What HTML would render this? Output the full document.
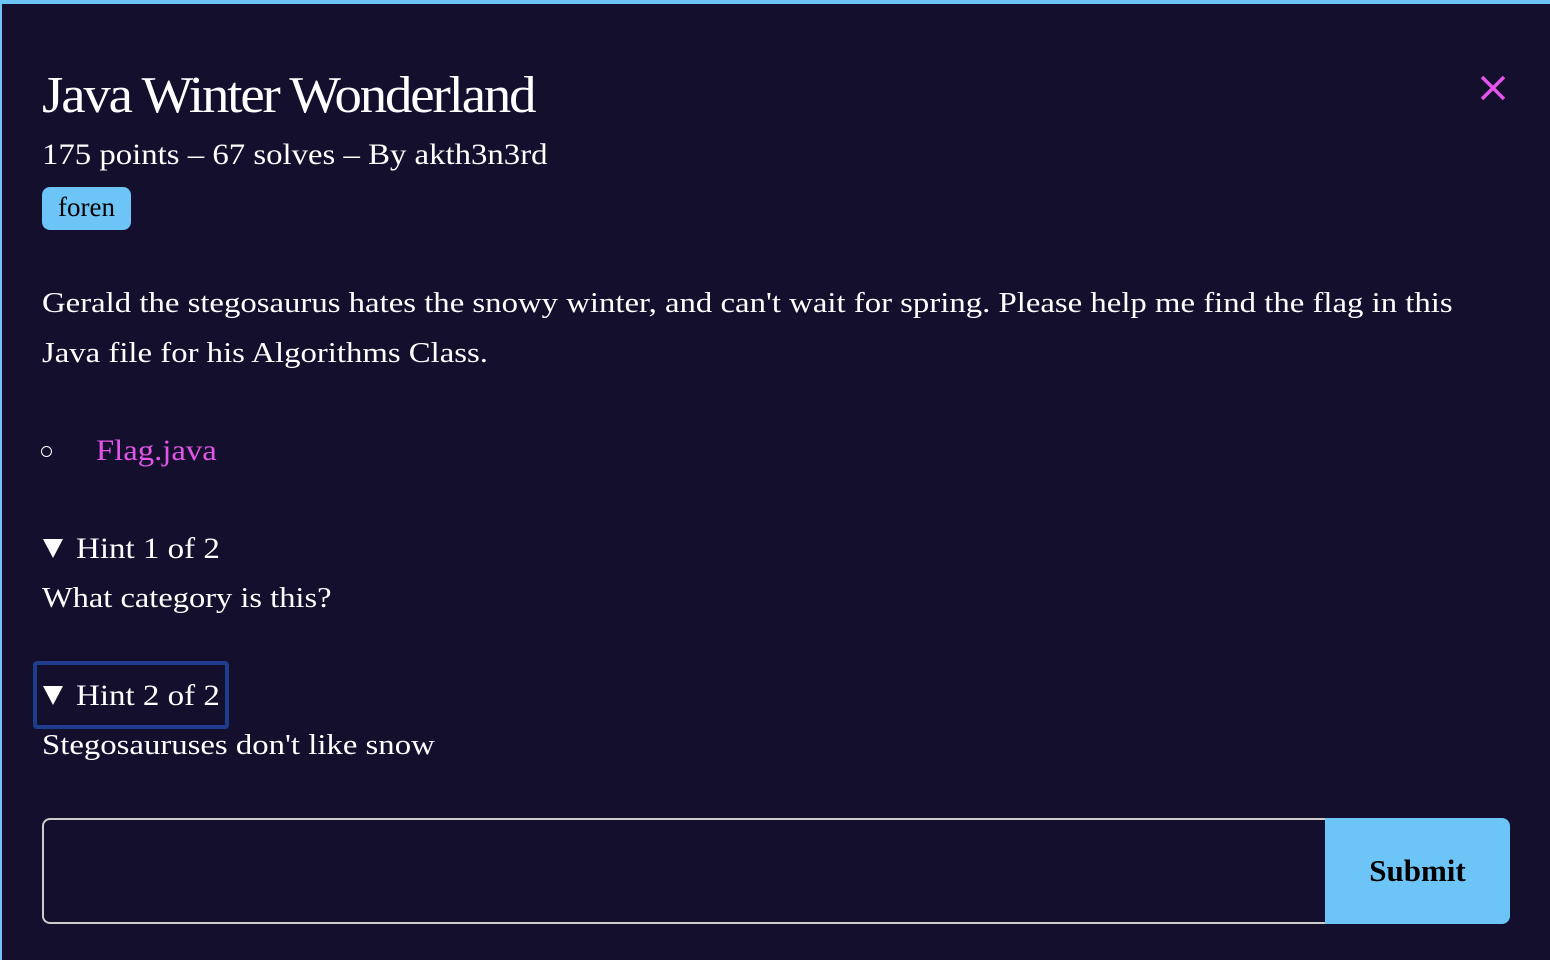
<!DOCTYPE html>
<html><head><style>
html,body{margin:0;padding:0}
body{width:1550px;height:960px;background:#130f2d;overflow:hidden;position:relative;font-family:"Liberation Serif",serif;color:#fff}
.frame{position:absolute;left:0;top:0;width:1550px;height:960px;border-top:4px solid #6cc4f7;border-left:2px solid #6cc4f7;box-sizing:border-box}
.t{position:absolute;white-space:nowrap;line-height:1;transform-origin:0 0}
.tri{position:absolute;left:43px;width:0;height:0;border-left:10px solid transparent;border-right:10px solid transparent;border-top:19px solid #fff}
</style></head><body>
<div class="frame"></div>
<div class="t" style="left:42px;top:70px;font-size:52px;letter-spacing:-2px;transform:scaleX(1.053)">Java Winter Wonderland</div>
<div class="t" style="left:42px;top:140px;font-size:30px;transform:scaleX(1.093)">175 points – 67 solves – By akth3n3rd</div>
<div style="position:absolute;left:42px;top:187px;width:89px;height:43px;background:#6cc4f7;border-radius:8px;color:#000;font-size:27px;line-height:41px;text-align:center">foren</div>
<div class="t" style="left:42px;top:289px;font-size:29px;transform:scaleX(1.13)">Gerald the stegosaurus hates the snowy winter, and can't wait for spring. Please help me find the flag in this</div>
<div class="t" style="left:42px;top:339px;font-size:29px;transform:scaleX(1.13)">Java file for his Algorithms Class.</div>
<div style="position:absolute;left:41px;top:446px;width:9px;height:9px;border:1.5px solid #fff;border-radius:50%"></div>
<div class="t" style="left:96px;top:436px;font-size:30px;color:#e255e8;transform:scaleX(1.09)">Flag.java</div>
<div class="tri" style="top:539px"></div>
<div class="t" style="left:76px;top:534px;font-size:30px;transform:scaleX(1.1)">Hint 1 of 2</div>
<div class="t" style="left:42px;top:584px;font-size:29px;transform:scaleX(1.12)">What category is this?</div>
<div style="position:absolute;left:33px;top:661px;width:196px;height:68px;border:4px solid #1e3d8c;border-radius:4px;box-sizing:border-box"></div>
<div class="tri" style="top:686px"></div>
<div class="t" style="left:76px;top:681px;font-size:30px;transform:scaleX(1.1)">Hint 2 of 2</div>
<div class="t" style="left:42px;top:731px;font-size:29px;transform:scaleX(1.13)">Stegosauruses don't like snow</div>
<div style="position:absolute;left:42px;top:818px;width:1290px;height:106px;border:2px solid #ccc;border-right:none;border-radius:8px 0 0 8px;box-sizing:border-box"></div>
<div style="position:absolute;left:1325px;top:818px;width:185px;height:106px;background:#6cc4f7;border-radius:0 8px 8px 0;color:#000;font-weight:bold;font-size:31px;line-height:106px;text-align:center">Submit</div>
<svg style="position:absolute;left:1479px;top:74px" width="28" height="28" viewBox="0 0 28 28"><path d="M3 3L25 25M25 3L3 25" stroke="#e255e8" stroke-width="3.5"/></svg>
</body></html>
